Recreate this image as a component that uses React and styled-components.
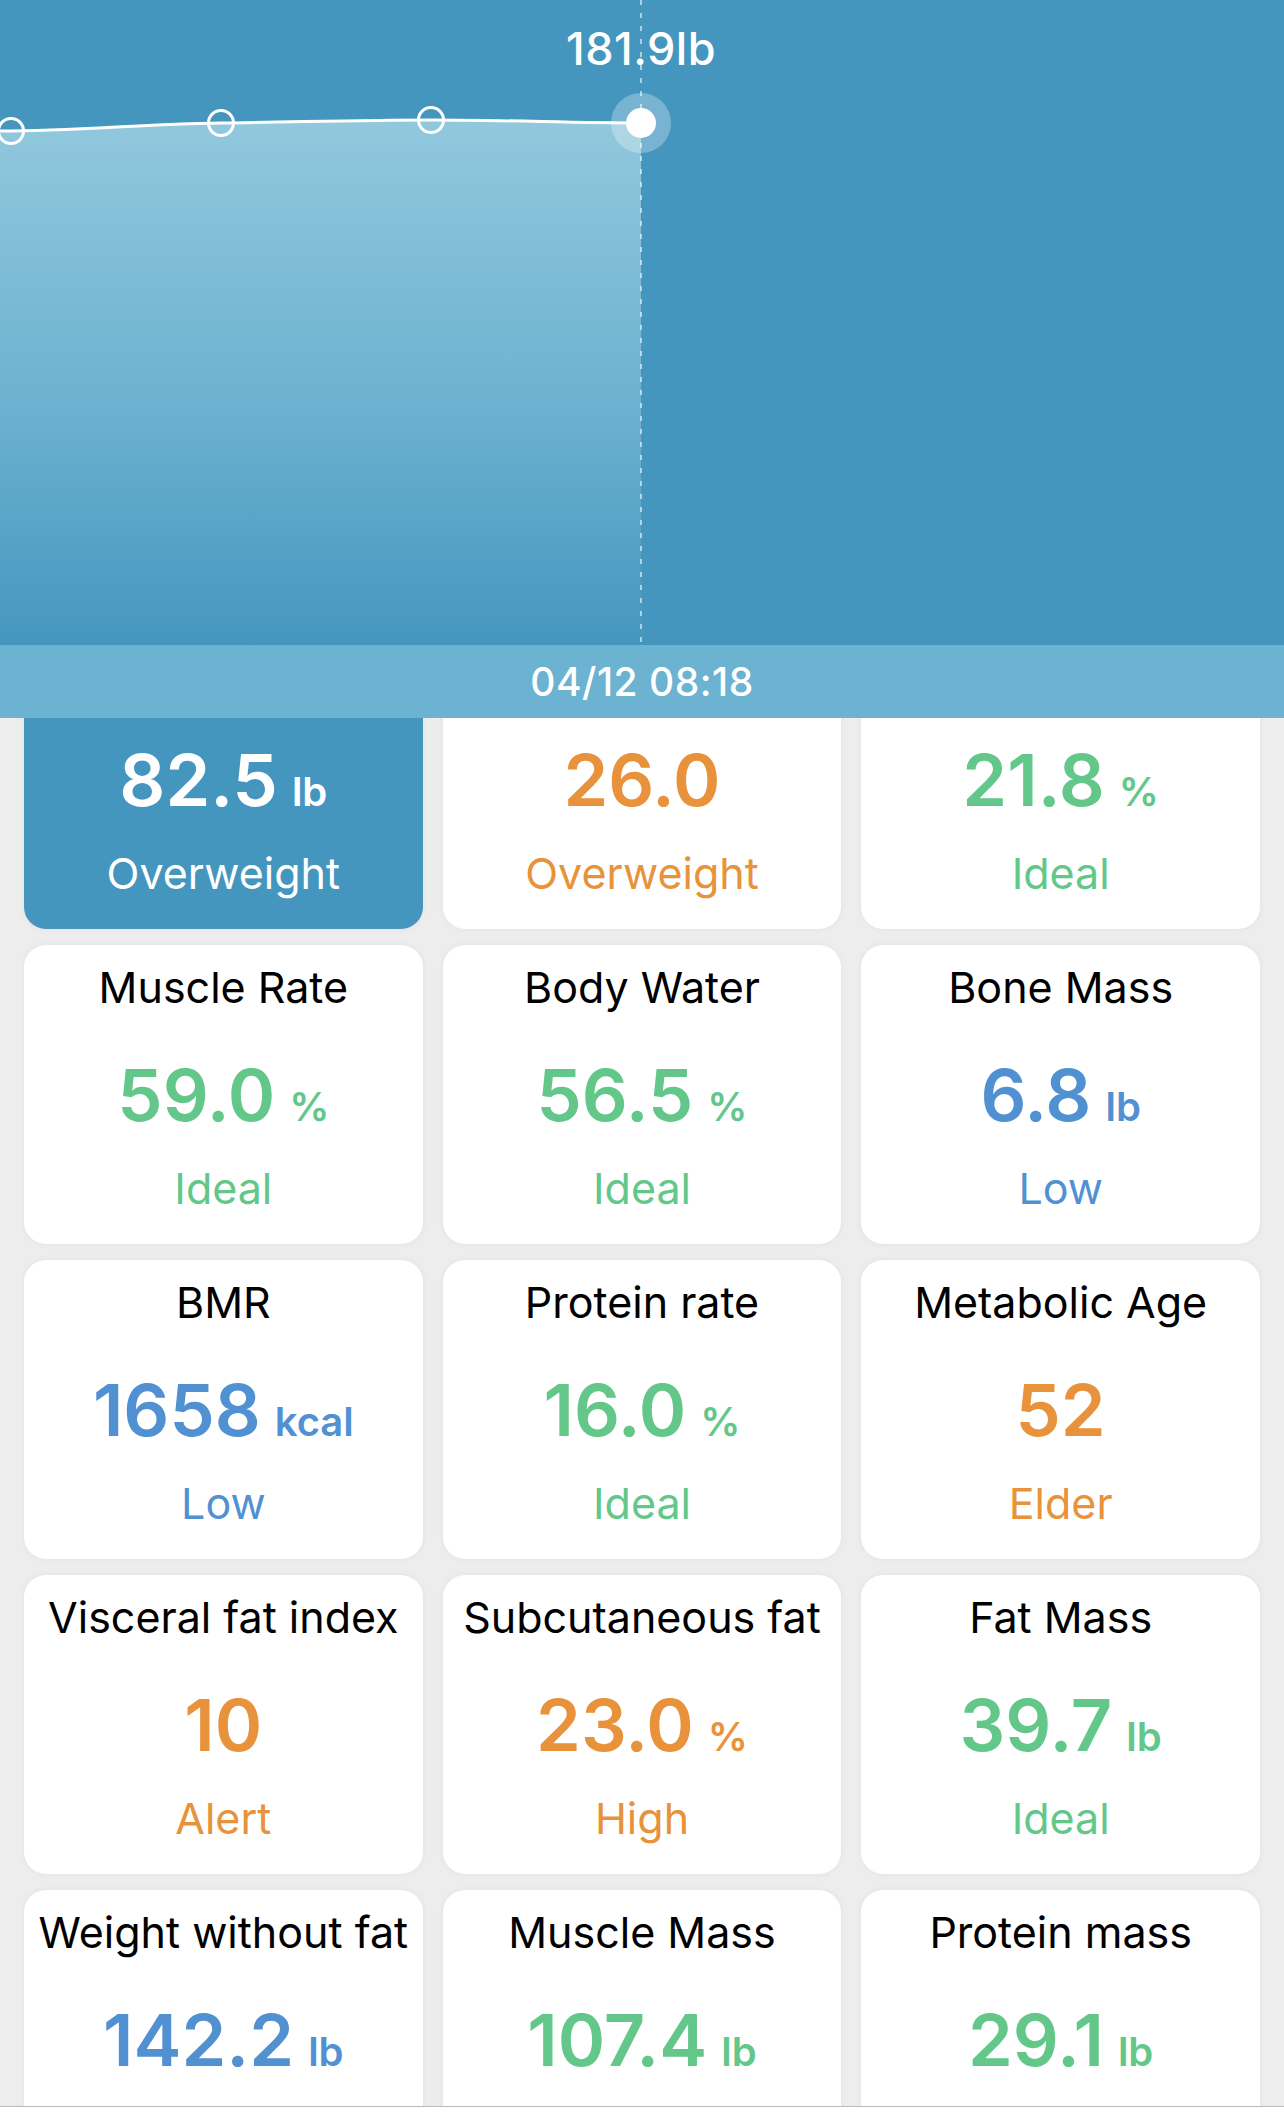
import styled, { createGlobalStyle } from 'styled-components';

const GlobalStyle = createGlobalStyle`
  html, body {
    margin: 0;
    padding: 0;
    overflow: hidden;
    background: #ededed;
  }

  * {
    box-sizing: border-box;
  }
`;

const CHART_BG = '#4596bf';

const tones = {
  green: '#63c78a',
  orange: '#e8923c',
  blue: '#5191d2',
  white: '#ffffff',
};

const metrics = [
  { title: 'Weight', value: '82.5', unit: 'lb', status: 'Overweight', tone: 'white', active: true },
  { title: 'BMI', value: '26.0', status: 'Overweight', tone: 'orange' },
  { title: 'Body Fat', value: '21.8', unit: '%', status: 'Ideal', tone: 'green' },
  { title: 'Muscle Rate', value: '59.0', unit: '%', status: 'Ideal', tone: 'green' },
  { title: 'Body Water', value: '56.5', unit: '%', status: 'Ideal', tone: 'green' },
  { title: 'Bone Mass', value: '6.8', unit: 'lb', status: 'Low', tone: 'blue' },
  { title: 'BMR', value: '1658', unit: 'kcal', status: 'Low', tone: 'blue' },
  { title: 'Protein rate', value: '16.0', unit: '%', status: 'Ideal', tone: 'green' },
  { title: 'Metabolic Age', value: '52', status: 'Elder', tone: 'orange' },
  { title: 'Visceral fat index', value: '10', status: 'Alert', tone: 'orange' },
  { title: 'Subcutaneous fat', value: '23.0', unit: '%', status: 'High', tone: 'orange' },
  { title: 'Fat Mass', value: '39.7', unit: 'lb', status: 'Ideal', tone: 'green' },
  { title: 'Weight without fat', value: '142.2', unit: 'lb', status: 'Ideal', tone: 'blue' },
  { title: 'Muscle Mass', value: '107.4', unit: 'lb', status: 'Ideal', tone: 'green' },
  { title: 'Protein mass', value: '29.1', unit: 'lb', status: 'Ideal', tone: 'green' },
];

const points = [
  { x: 11, y: 131 },
  { x: 221, y: 123 },
  { x: 431, y: 120 },
];
const current = { x: 641, y: 123 };

const curve = 'M 0 131 C 80 131 140 124 221 123 C 300 122 360 120 431 120 C 510 120 570 123 641 123';

function WeightChart() {
  return (
    <ChartSvg width="1284" height="645" viewBox="0 0 1284 645">
      <defs>
        <linearGradient id="areaFill" x1="0" y1="120" x2="0" y2="645" gradientUnits="userSpaceOnUse">
          <stop offset="0" stopColor="#91c8dd" />
          <stop offset="0.55" stopColor="#6cb1d0" />
          <stop offset="1" stopColor="#4596bf" />
        </linearGradient>
      </defs>
      <path d={`${curve} L 641 645 L 0 645 Z`} fill="url(#areaFill)" />
      <line
        x1={current.x}
        y1="0"
        x2={current.x}
        y2="645"
        stroke="rgba(255,255,255,0.75)"
        strokeWidth="1.5"
        strokeDasharray="5 8"
      />
      <path d={curve} fill="none" stroke="#fff" strokeWidth="3" />
      {points.map((p) => (
        <circle key={p.x} cx={p.x} cy={p.y} r="12.5" fill="none" stroke="#fff" strokeWidth="3" />
      ))}
      <circle cx={current.x} cy={current.y} r="30" fill="rgba(255,255,255,0.28)" />
      <circle cx={current.x} cy={current.y} r="15" fill="#fff" />
      <ChartLabel x={current.x} y="65" textAnchor="middle">181.9lb</ChartLabel>
    </ChartSvg>
  );
}

export default function App() {
  return (
    <>
      <GlobalStyle />
      <Page>
        <Header>
          <WeightChart />
          <DateBar>04/12 08:18</DateBar>
        </Header>
        <Grid>
          {metrics.map((m) => (
            <Card key={m.title} active={m.active}>
              <CardTitle active={m.active}>{m.title}</CardTitle>
              <ValueRow tone={m.tone}>
                <Value>{m.value}</Value>
                {m.unit && <Unit>{m.unit}</Unit>}
              </ValueRow>
              <Status tone={m.tone}>{m.status}</Status>
            </Card>
          ))}
        </Grid>
        <BottomBar />
      </Page>
    </>
  );
}

const Page = styled.div`
  width: 1284px;
  height: 2118px;
  overflow: hidden;
  font-family: Inter, 'Noto Sans', 'Liberation Sans', sans-serif;
  background: #ededed;
`;

const Header = styled.header`
  position: relative;
  z-index: 2;
  display: flex;
  flex-direction: column;
  background: ${CHART_BG};
`;

const ChartSvg = styled.svg`
  display: block;
`;

const ChartLabel = styled.text`
  font-family: Inter, 'Liberation Sans', sans-serif;
  font-size: 45px;
  font-weight: 500;
  letter-spacing: 0.5px;
  fill: #ffffff;
`;

const DateBar = styled.div`
  height: 73px;
  display: flex;
  align-items: center;
  justify-content: center;
  background: #6bb3d1;
  color: #ffffff;
  font-size: 39px;
  font-weight: 500;
  letter-spacing: 0.5px;
`;

const Grid = styled.main`
  display: grid;
  grid-template-columns: repeat(3, 1fr);
  column-gap: 20px;
  row-gap: 16px;
  padding: 0 24px;
  margin-top: -88px;
`;

const Card = styled.section`
  height: 299px;
  padding-top: 17px;
  display: flex;
  flex-direction: column;
  align-items: center;
  border-radius: 22px;
  background: ${(props) => (props.active ? CHART_BG : '#ffffff')};
  box-shadow: 0 0 6px rgba(0, 0, 0, 0.05);
`;

const CardTitle = styled.h3`
  margin: 0;
  font-size: 43px;
  line-height: 50px;
  font-weight: 400;
  white-space: nowrap;
  color: ${(props) => (props.active ? '#ffffff' : '#000000')};
`;

const ValueRow = styled.div`
  margin-top: 43px;
  height: 80px;
  display: flex;
  align-items: baseline;
  color: ${(props) => tones[props.tone]};
`;

const Value = styled.span`
  font-size: 72px;
  line-height: 80px;
  font-weight: 600;
`;

const Unit = styled.span`
  margin-left: 14px;
  font-size: 40px;
  font-weight: 600;
`;

const Status = styled.div`
  margin-top: 28px;
  font-size: 43px;
  line-height: 50px;
  font-weight: 400;
  color: ${(props) => tones[props.tone]};
`;

const BottomBar = styled.footer`
  position: fixed;
  left: 0;
  right: 0;
  bottom: 0;
  height: 12px;
  background: #ffffff;
  border-top: 1px solid #b9b9b9;
`;
